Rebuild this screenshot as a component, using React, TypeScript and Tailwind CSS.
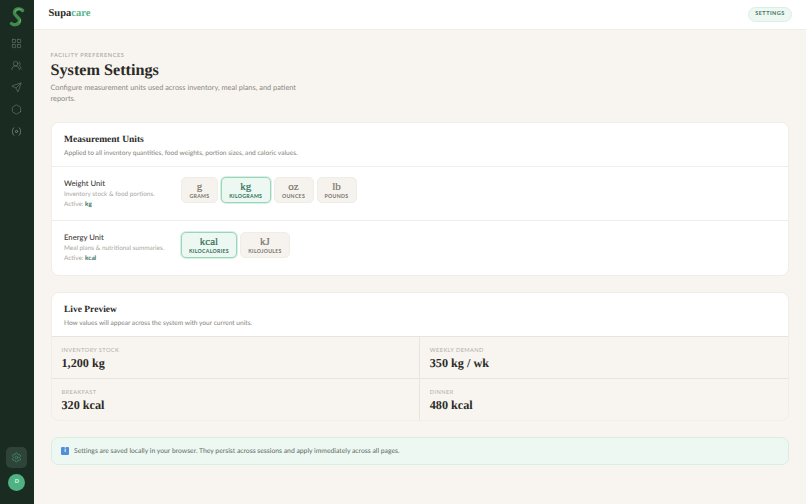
import { LayoutGrid, UsersRound, Send, Hexagon, Settings } from "lucide-react";

const serif = "[font-family:'Liberation_Serif',serif]";

type Unit = { symbol: string; label: string; active?: boolean; width: string };

const weightUnits: Unit[] = [
  { symbol: "g", label: "GRAMS", width: "w-[37px]" },
  { symbol: "kg", label: "KILOGRAMS", active: true, width: "w-[49.5px]" },
  { symbol: "oz", label: "OUNCES", width: "w-[40px]" },
  { symbol: "lb", label: "POUNDS", width: "w-[40px]" },
];

const energyUnits: Unit[] = [
  { symbol: "kcal", label: "KILOCALORIES", active: true, width: "w-[56px]" },
  { symbol: "kJ", label: "KILOJOULES", width: "w-[50px]" },
];

function UnitButton({ unit }: { unit: Unit }) {
  return (
    <button
      className={`${unit.width} h-[26px] rounded-[5px] border flex flex-col items-center justify-center ${
        unit.active
          ? "border-[#9ad6b9] bg-[#edf8f2] text-[#2f6f57] shadow-[0_0_0_1px_#d8efe3]"
          : "border-[#f0ece6] bg-[#f6f3ee] text-[#77736c]"
      }`}
    >
      <span className={`${serif} text-[11px] leading-[10px] mb-[2px] [-webkit-text-stroke:0.2px]`}>{unit.symbol}</span>
      <span className="text-[5.2px] leading-[6px] font-bold tracking-[0.3px]">{unit.label}</span>
    </button>
  );
}

function UnitRow({
  title,
  sub,
  active,
  units,
}: {
  title: string;
  sub: string;
  active: string;
  units: Unit[];
}) {
  return (
    <div className="h-[54.5px] flex items-center gap-[3px] px-[12.5px] border-t border-[#f1eee8]">
      <div className="w-[114px] shrink-0">
        <div className="text-[7.7px] leading-[11px] font-medium text-[#3c3a36]">{title}</div>
        <div className="text-[6.4px] leading-[10px] mt-[1px] text-[#a9a69f]">{sub}</div>
        <div className="text-[6.4px] leading-[9px] text-[#a9a69f]">
          Active: <span className="font-bold text-[#2f6f57]">{active}</span>
        </div>
      </div>
      <div className="flex gap-[3px] mb-[6px]">
        {units.map((u) => (
          <UnitButton key={u.label} unit={u} />
        ))}
      </div>
    </div>
  );
}

function Stat({ label, value, border }: { label: string; value: string; border?: boolean }) {
  return (
    <div className={`h-[41px] px-[10px] pt-[10px] ${border ? "border-r border-[#e8e5de]" : ""}`}>
      <div className="text-[5.7px] leading-[7px] tracking-[0.4px] text-[#b3b0a9]">{label}</div>
      <div className={`${serif} text-[12.2px] leading-[16px] mt-[1px] font-bold text-[#2b2a27]`}>{value}</div>
    </div>
  );
}

function CardHead({ title, sub }: { title: string; sub: string }) {
  return (
    <div className="h-[43px] px-[12.5px] pt-[11px] bg-white">
      <div className={`${serif} text-[9.5px] leading-[12px] font-bold text-[#2b2a27]`}>{title}</div>
      <div className="text-[6.6px] leading-[9px] mt-[3px] text-[#85827b]">{sub}</div>
    </div>
  );
}

export default function App() {
  return (
    <div className="h-[504px] w-[806px] flex overflow-hidden bg-[#f8f5f0] font-['Lato',sans-serif] [text-rendering:geometricPrecision]">
      {/* sidebar */}
      <aside className="w-[33.5px] shrink-0 bg-[#1a2b22] flex flex-col items-center pt-[7px] pb-[13px]">
        <svg width="16" height="20" viewBox="0 0 16 20" aria-hidden="true">
          <path
            d="M13.5 3.5C11 .8 6 1.6 5.4 5.4 4.9 9.2 11 10 10.6 13.8 10.2 17.4 5.5 19 2.5 16.5"
            fill="none"
            stroke="#3f8a4c"
            strokeWidth="3.4"
            strokeLinecap="round"
          />
          <path
            d="M12.5 2.8C10 1.2 6.6 2.4 6.2 5.2M10 16c1.4-1 1.7-2.5 1.5-3.6"
            fill="none"
            stroke="#8cc788"
            strokeWidth=".7"
          />
        </svg>
        <nav className="mt-[10.5px] flex flex-col items-center gap-[11px] text-[#75867c]">
          <LayoutGrid size={11} strokeWidth={1.2} />
          <UsersRound size={11} strokeWidth={1.2} />
          <Send size={11} strokeWidth={1.2} />
          <Hexagon size={11} strokeWidth={1.2} />
          <svg width="11" height="11" viewBox="0 0 24 24" fill="none" stroke="currentColor" strokeWidth="2" strokeLinecap="round">
            <path d="M6 4C2 8 2 16 6 20M18 4c4 4 4 12 0 16" />
            <circle cx="12" cy="12" r="2.5" />
          </svg>
        </nav>
        <div className="mt-auto flex flex-col items-center gap-[6px]">
          <div className="w-[21px] h-[21px] rounded-[5px] bg-[#2e4438] flex items-center justify-center text-[#4c9a74]">
            <Settings size={11} strokeWidth={1.3} />
          </div>
          <div className="w-[17px] h-[17px] rounded-full bg-[#4fb283] flex items-center justify-center text-[5.5px] font-bold text-[#e9f6ef]">
            D
          </div>
        </div>
      </aside>

      <div className="flex-1 min-w-0 flex flex-col">
        {/* top bar */}
        <header className="h-[29.5px] shrink-0 bg-white border-b border-[#f1eee8] flex items-center justify-between pl-[15px] pr-[14px]">
          <div className={`${serif} text-[10.5px] font-bold text-[#2b2a27]`}>
            Supa<span className="text-[#55b58a]">care</span>
          </div>
          <div className="h-[14.5px] w-[44px] justify-center rounded-full bg-[#edf8f2] border border-[#dcefe5] flex items-center text-[5.5px] font-bold tracking-[0.5px] text-[#41735f]">
            SETTINGS
          </div>
        </header>

        <main className="px-[17px] pt-[22px]">
          <div className="text-[5.7px] leading-[7px] font-medium tracking-[0.55px] text-[#a8a59e]">FACILITY PREFERENCES</div>
          <h1 className={`${serif} text-[16.2px] leading-[22px] mt-[0.5px] font-bold text-[#2b2a27]`}>System Settings</h1>
          <p className="w-[250px] text-[7.4px] leading-[11.5px] mt-[0.5px] text-[#8b8880]">
            Configure measurement units used across inventory, meal plans, and patient reports.
          </p>

          <section className="mt-[17px] rounded-[8px] bg-white border border-[#f1eee8] overflow-hidden">
            <CardHead
              title="Measurement Units"
              sub="Applied to all inventory quantities, food weights, portion sizes, and caloric values."
            />
            <UnitRow
              title="Weight Unit"
              sub="Inventory stock & food portions."
              active="kg"
              units={weightUnits}
            />
            <UnitRow
              title="Energy Unit"
              sub="Meal plans & nutritional summaries."
              active="kcal"
              units={energyUnits}
            />
          </section>

          <section className="mt-[16px] rounded-[8px] border border-[#f1eee8] overflow-hidden">
            <CardHead title="Live Preview" sub="How values will appear across the system with your current units." />
            <div className="grid grid-cols-2 border-t border-[#e8e5de]">
              <Stat label="INVENTORY STOCK" value="1,200 kg" border />
              <Stat label="WEEKLY DEMAND" value="350 kg / wk" />
            </div>
            <div className="grid grid-cols-2 border-t border-[#e8e5de]">
              <Stat label="BREAKFAST" value="320 kcal" border />
              <Stat label="DINNER" value="480 kcal" />
            </div>
          </section>

          <div className="mt-[16.5px] h-[27.5px] px-[9.5px] rounded-[7px] bg-[#edf8f2] border border-[#d9eee3] flex items-center gap-[5px]">
            <span className="w-[8px] h-[8px] rounded-[1px] bg-[#4f8fdc] text-white flex items-center justify-center">
              <span className="text-[6.5px] leading-none font-bold">i</span>
            </span>
            <span className="text-[6.8px] text-[#5c6b63]">
              Settings are saved locally in your browser. They persist across sessions and apply immediately across all pages.
            </span>
          </div>
        </main>
      </div>
    </div>
  );
}
